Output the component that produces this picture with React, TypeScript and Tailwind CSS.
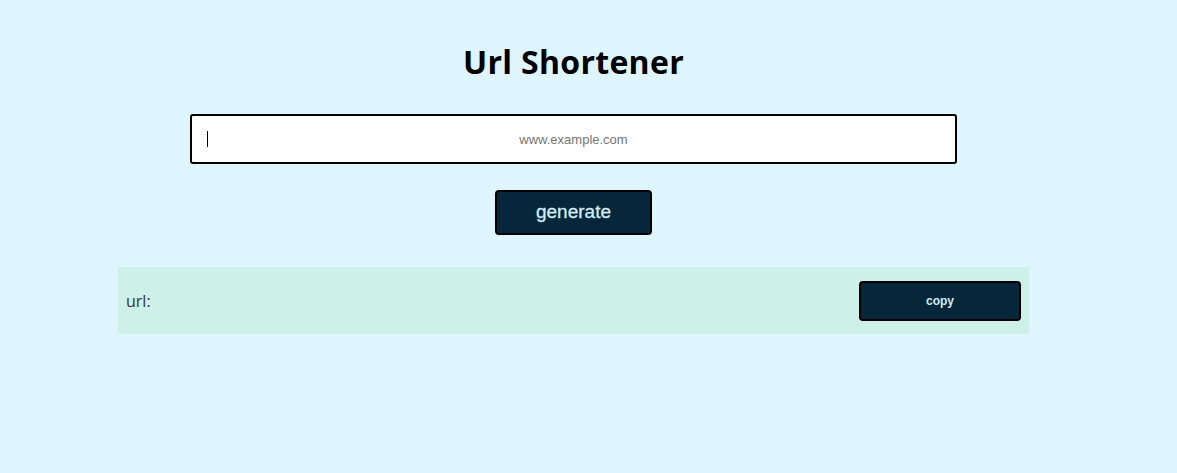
import { useState } from "react";

export default function App() {
  const [url, setUrl] = useState("");
  const [short] = useState("");

  return (
    <div className="min-h-screen w-full bg-[#dff5fd] font-['Liberation_Sans',Arial,sans-serif]">
      <div className="flex w-[1147px] flex-col items-center pt-[40px]">
        <h1 className="font-['Open_Sans','Noto_Sans',sans-serif] text-[32px] font-bold leading-[44px] tracking-[0.3px] text-black">
          Url Shortener
        </h1>

        <div className="relative mt-[30px] h-[50px] w-[767px]">
          <input
            value={url}
            onChange={(e) => setUrl(e.target.value)}
            placeholder="www.example.com"
            className="h-full w-full rounded-[3px] border-2 border-black bg-white px-4 text-center text-[13px] text-black outline-none placeholder:text-[#767676]"
          />
          {!url && <span className="pointer-events-none absolute left-[17px] top-[17px] h-[16px] w-px bg-black" />}
        </div>

        <button className="mt-[26px] h-[45px] w-[157px] rounded-[4px] border-2 border-black bg-[#06263a] text-[19px] text-[#d3ecf8] [-webkit-text-stroke:0.3px_#d3ecf8]">
          generate
        </button>

        <div className="mt-[32px] flex h-[67px] w-[911px] items-center justify-between rounded-[2px] bg-[#cdf0e8] pl-[8px] pr-[8px]">
          <span className="font-['Open_Sans','Noto_Sans',sans-serif] text-[16px] text-[#333]">url: {short}</span>
          <button className="h-[40px] w-[162px] rounded-[4px] border-2 border-black bg-[#06263a] text-[12px] font-bold text-[#d3ecf8]">
            copy
          </button>
        </div>
      </div>
    </div>
  );
}
